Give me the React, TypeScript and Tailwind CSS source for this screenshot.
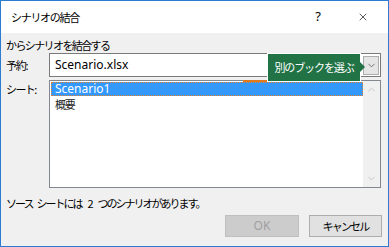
import { ChevronDown, ChevronUp, X } from "lucide-react"

const JP = "font-['Noto_Sans_CJK_JP',sans-serif] text-[11px]"

export default function App() {
  return (
    <div className="relative flex h-[247px] w-[389px] flex-col border border-[#2b7bd0] font-['Segoe_UI','Noto_Sans','Noto_Sans_CJK_JP',sans-serif] text-[12px] text-[#000]">
      {/* title bar */}
      <div className="flex h-[32px] shrink-0 items-center bg-white pl-[10px]">
        <span className={`${JP} tracking-[-1.3px]`}>シナリオの結合</span>
        <span className="ml-auto mr-[36px] text-[13px]">?</span>
        <X className="mr-[19px] h-[12px] w-[12px]" strokeWidth={1.3} />
      </div>

      {/* body */}
      <div className="flex flex-1 flex-col bg-[#f0f0f0] pl-[5px] pr-[6px]">
        <div className={`mt-[5px] h-[15px] leading-[15px] ${JP} tracking-[-1.6px]`}>からシナリオを結合する</div>

        <div className="flex h-[24px] items-center">
          <span className={`w-[43px] ${JP} tracking-[-1.2px]`}>予約:</span>
          <div className="flex h-[24px] w-[332px] items-center border border-[#7a7a7a] bg-white pl-[5px]">
            <span className="text-[12px]">Scenario.xlsx</span>
            <div className="ml-auto mr-[1px] flex h-[19px] w-[16px] items-center justify-center border border-[#adadad] bg-[#e5e5e5]">
              <ChevronDown className="h-[11px] w-[11px] text-[#444]" strokeWidth={1.5} />
            </div>
          </div>
        </div>

        <div className="mt-[3px] flex h-[108px]">
          <span className={`w-[43px] pt-[1px] ${JP} tracking-[-1.6px]`}>シート:</span>
          <div className="flex w-[332px] border border-[#828790] bg-white">
            <div className="flex flex-1 flex-col pl-[1px] pt-[1px]">
              <div className="flex h-[14px] items-center border border-dotted border-[#e08030] bg-[#3399ff] pl-[3px] text-[12px] leading-[12px] text-white">
                Scenario1
              </div>
              <div className={`pl-[4px] pt-[1px] leading-[14px] text-[#222] ${JP} tracking-[-1.2px]`}>概要</div>
            </div>
            <div className="flex w-[17px] flex-col items-center justify-between bg-[#f0f0f0] py-[3px]">
              <ChevronUp className="h-[11px] w-[11px] text-[#c2c2c2]" strokeWidth={2} />
              <ChevronDown className="h-[11px] w-[11px] text-[#c2c2c2]" strokeWidth={2} />
            </div>
          </div>
        </div>

        <div className={`mt-[7px] flex h-[16px] items-center leading-[16px] ${JP} tracking-[-2px]`}>
          <span>ソース</span>
          <span className="ml-[4px]">シートには</span>
          <span className="ml-[6px]">2</span>
          <span className="ml-[6px]">つのシナリオがあります。</span>
        </div>

        <div className="mt-[4px] flex justify-end gap-[10px]">
          <div className="flex h-[22px] w-[74px] items-center justify-center border border-[#bfbfbf] bg-[#cccccc] text-[#a0a0a0]">
            OK
          </div>
          <div className={`flex h-[22px] w-[73px] items-center justify-center border border-[#adadad] bg-[#e1e1e1] ${JP} tracking-[-1.8px]`}>
            キャンセル
          </div>
        </div>
      </div>

      {/* callout over the file box */}
      <div className="absolute left-[242px] top-[79px] h-[2px] w-[68px] bg-[#e07a1f]" />
      <div className={`absolute left-[266px] top-[52px] flex h-[29px] w-[94px] items-center justify-center whitespace-nowrap border border-white bg-[#217346] text-white ${JP} tracking-[-1.1px]`}>
        別のブックを選ぶ
      </div>
      <div className="absolute left-[359px] top-[61px] h-0 w-0 border-y-[5px] border-l-[5px] border-y-transparent border-l-[#217346]" />
    </div>
  )
}
